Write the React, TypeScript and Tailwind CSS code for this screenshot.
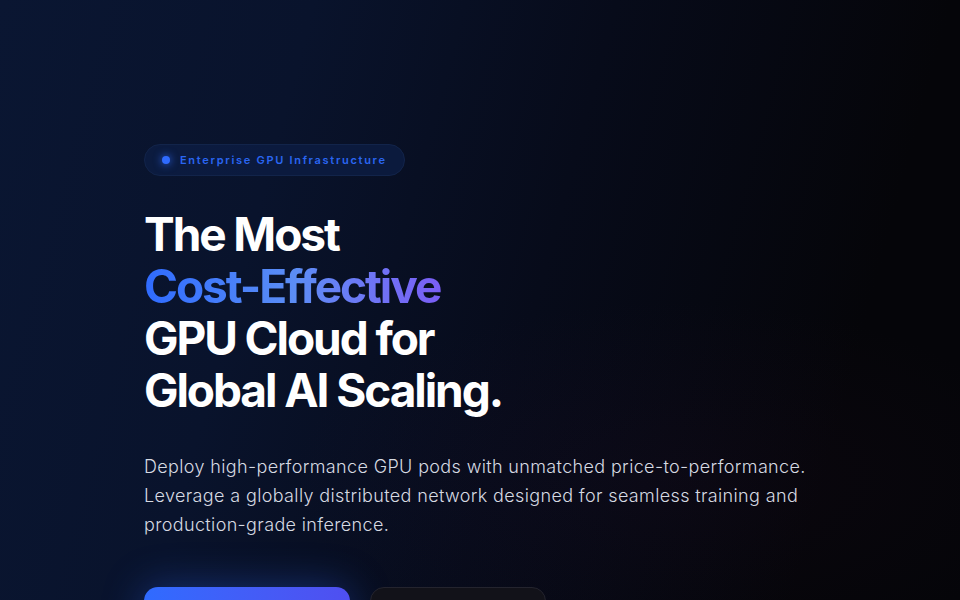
import React from "react";

export default function App() {
  return (
    <div
      className="relative h-[600px] w-[960px] overflow-hidden bg-[#050509]"
      style={{ fontFamily: "Inter, 'Liberation Sans', sans-serif" }}
    >
      <div className="absolute inset-0 bg-[linear-gradient(105deg,#0a1632_0%,#09132c_28%,#070b1a_55%,#050509_85%)]" />
      <div className="absolute inset-0 bg-[radial-gradient(ellipse_40%_30%_at_70%_80%,rgba(60,20,60,0.10)_0%,transparent_100%)]" />
      <div className="relative flex flex-col items-start pl-[144px] pt-[144px]">
        <div className="flex h-8 items-center gap-[10px] rounded-full border border-[#12244a] bg-[#0c1d44]/80 pl-[17px] pr-[17px]">
          <span className="h-2 w-2 rounded-full bg-[#2f6bff] shadow-[0_0_8px_#2f6bff]" />
          <span className="text-[11px] font-semibold tracking-[0.155em] text-[#2a66f2]">
            Enterprise GPU Infrastructure
          </span>
        </div>
        <h1 className="mt-[32px] text-[46px] font-bold leading-[52px] tracking-[-0.045em] text-white">
          <span className="block">The Most</span>
          <span className="block w-fit bg-gradient-to-r from-[#2f6bff] via-[#5b8df5] to-[#7a5cf5] bg-clip-text pr-1 text-transparent">
            Cost-Effective
          </span>
          <span className="block">GPU Cloud for</span>
          <span className="block">Global AI Scaling.</span>
        </h1>
        <p className="mt-[36px] text-[18px] font-light leading-[29px] tracking-[0.02em] text-[#d6dae2]">
          Deploy high-performance GPU pods with unmatched price-to-performance.
          <br />
          Leverage a globally distributed network designed for seamless training and
          <br />
          production-grade inference.
        </p>
        <div className="mt-[48px] flex items-center gap-[20px]">
          <button className="flex h-[54px] w-[206px] items-center justify-center rounded-[14px] bg-gradient-to-r from-[#2f6bff] to-[#4f4ff0] text-[16px] font-semibold text-white shadow-[0_0_40px_rgba(47,107,255,0.35)]">
            Deploy GPU Pod
          </button>
          <button className="flex h-[54px] w-[176px] items-center justify-center rounded-[14px] border border-[#24242e] bg-[#121219] text-[16px] font-semibold text-white">
            View Pricing
          </button>
        </div>
      </div>
    </div>
  );
}
